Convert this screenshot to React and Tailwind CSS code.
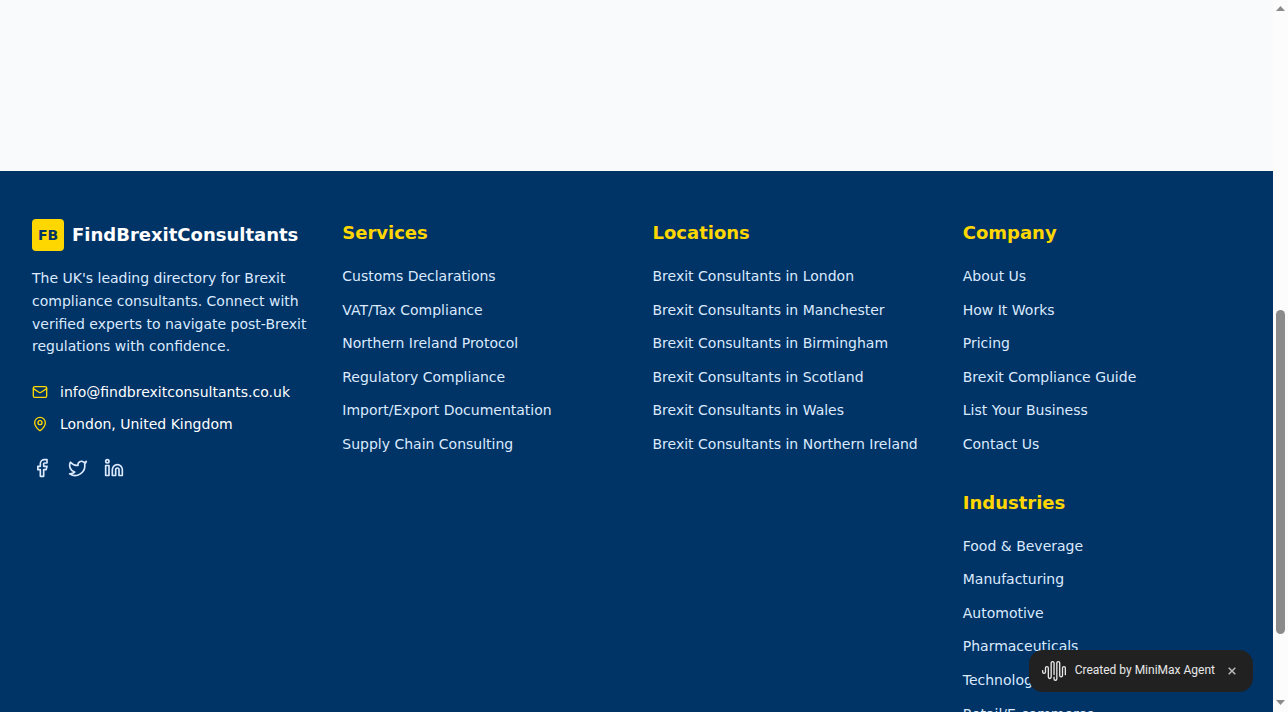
import React from 'react';
import { Facebook, Linkedin, Mail, MapPin, Twitter } from 'lucide-react';

const services = [
  'Customs Declarations',
  'VAT/Tax Compliance',
  'Northern Ireland Protocol',
  'Regulatory Compliance',
  'Import/Export Documentation',
  'Supply Chain Consulting',
];

const locations = [
  'Brexit Consultants in London',
  'Brexit Consultants in Manchester',
  'Brexit Consultants in Birmingham',
  'Brexit Consultants in Scotland',
  'Brexit Consultants in Wales',
  'Brexit Consultants in Northern Ireland',
];

const company = [
  'About Us',
  'How It Works',
  'Pricing',
  'Brexit Compliance Guide',
  'List Your Business',
  'Contact Us',
];

const industries = [
  'Food & Beverage',
  'Manufacturing',
  'Automotive',
  'Pharmaceuticals',
  'Technology',
  'Retail/E-commerce',
];

const socials = [
  { label: 'Facebook', Icon: Facebook },
  { label: 'Twitter', Icon: Twitter },
  { label: 'LinkedIn', Icon: Linkedin },
];

function LinkGroup({ title, items }) {
  return (
    <nav aria-label={title}>
      <h3 className="mb-4 text-lg font-bold text-[#ffd700]">{title}</h3>
      <ul className="space-y-2 leading-[1.6]">
        {items.map((item) => (
          <li key={item}>
            <a href="#" className="text-sm text-blue-100 hover:text-[#ffd700]">
              {item}
            </a>
          </li>
        ))}
      </ul>
    </nav>
  );
}

function Brand() {
  return (
    <div>
      <div className="mb-4 flex items-center gap-2">
        <div className="flex size-8 shrink-0 items-center justify-center rounded bg-[#ffd700]">
          <span className="text-sm font-bold text-[#003366]">FB</span>
        </div>
        <span className="text-lg font-bold text-white">FindBrexitConsultants</span>
      </div>
      <p className="mb-6 text-sm leading-relaxed text-blue-100">
        The UK's leading directory for Brexit compliance consultants. Connect with verified experts
        to navigate post-Brexit regulations with confidence.
      </p>
      <div className="space-y-3 text-sm text-white">
        <div className="flex items-center gap-3">
          <Mail className="size-4 shrink-0 text-[#ffd700]" />
          <span>info@findbrexitconsultants.co.uk</span>
        </div>
        <div className="flex items-center gap-3">
          <MapPin className="size-4 shrink-0 text-[#ffd700]" />
          <span>London, United Kingdom</span>
        </div>
      </div>
      <div className="mt-6 flex gap-4">
        {socials.map(({ label, Icon }) => (
          <a key={label} href="#" aria-label={label} className="text-blue-100 hover:text-[#ffd700]">
            <Icon className="size-5" />
          </a>
        ))}
      </div>
    </div>
  );
}

function WaveLogo() {
  return (
    <svg viewBox="0 0 24 24" className="size-6 shrink-0" fill="currentColor" aria-hidden="true">
      <path d="M16.278 2c1.156 0 2.093.927 2.093 2.07v12.501a.74.74 0 00.744.709.74.74 0 00.743-.709V9.099a2.06 2.06 0 012.071-2.049A2.06 2.06 0 0124 9.1v6.561a.649.649 0 01-.652.645.649.649 0 01-.653-.645V9.1a.762.762 0 00-.766-.758.762.762 0 00-.766.758v7.472a2.037 2.037 0 01-2.048 2.026 2.037 2.037 0 01-2.048-2.026v-12.5a.785.785 0 00-.788-.753.785.785 0 00-.789.752l-.001 15.904A2.037 2.037 0 0113.441 22a2.037 2.037 0 01-2.048-2.026V18.04c0-.356.292-.645.652-.645.36 0 .652.289.652.645v1.934c0 .263.142.506.372.638.23.131.514.131.744 0a.734.734 0 00.372-.638V4.07c0-1.143.937-2.07 2.093-2.07zm-5.674 0c1.156 0 2.093.927 2.093 2.07v11.523a.648.648 0 01-.652.645.648.648 0 01-.652-.645V4.07a.785.785 0 00-.789-.78.785.785 0 00-.789.78v14.013a2.06 2.06 0 01-2.07 2.048 2.06 2.06 0 01-2.071-2.048V9.1a.762.762 0 00-.766-.758.762.762 0 00-.766.758v3.8a2.06 2.06 0 01-2.071 2.049A2.06 2.06 0 010 12.9v-1.378c0-.357.292-.646.653-.646.36 0 .653.29.653.646V12.9c0 .418.343.757.766.757s.766-.339.766-.757V9.099a2.06 2.06 0 012.07-2.048 2.06 2.06 0 012.071 2.048v8.984c0 .419.343.758.767.758.423 0 .766-.339.766-.758V4.07c0-1.143.937-2.07 2.093-2.07z" />
    </svg>
  );
}

function AgentBadge() {
  return (
    <div className="absolute right-5 bottom-5 flex h-[42px] items-center gap-[9px] rounded-[14px] bg-[#212121] px-[13px] pb-px font-[Roboto,sans-serif] text-white/90">
      <WaveLogo />
      <span className="text-xs leading-[17px] whitespace-nowrap">Created by MiniMax Agent</span>
      <button
        type="button"
        aria-label="Close"
        className="flex size-4 items-center justify-center text-[#bbbbbb]"
      >
        <svg viewBox="0 0 8 8" className="size-2" stroke="currentColor" strokeWidth="1.5" aria-hidden="true">
          <path d="M0.7 0.7 7.3 7.3M7.3 0.7 0.7 7.3" />
        </svg>
      </button>
    </div>
  );
}

function ScrollRail() {
  return (
    <div className="flex w-[15px] shrink-0 flex-col items-center bg-[#fcfcfc] text-[#8b8b8b]" aria-hidden="true">
      <svg viewBox="0 0 15 15" className="size-[15px] shrink-0" fill="currentColor">
        <path d="M7.5 6 12 11H3z" />
      </svg>
      <div className="flex w-[9px] flex-1 flex-col">
        <div className="grow-[295]" />
        <div className="grow-[324] rounded-full bg-[#8b8b8b]" />
        <div className="grow-[63]" />
      </div>
      <svg viewBox="0 0 15 15" className="size-[15px] shrink-0" fill="currentColor">
        <path d="M3 3h9L7.5 8z" />
      </svg>
    </div>
  );
}

export default function App() {
  return (
    <div className="flex h-screen overflow-hidden bg-[#f8fafc] font-['DejaVu_Sans',sans-serif]">
      <div className="relative min-w-0 flex-1 overflow-hidden">
        <main className="h-[171px]" />
        <footer className="min-h-full bg-[#003366] px-8 py-12">
          <div className="grid grid-cols-1 gap-8 md:grid-cols-2 lg:grid-cols-4">
            <Brand />
            <LinkGroup title="Services" items={services} />
            <LinkGroup title="Locations" items={locations} />
            <div className="space-y-8">
              <LinkGroup title="Company" items={company} />
              <LinkGroup title="Industries" items={industries} />
            </div>
          </div>
        </footer>
        <AgentBadge />
      </div>
      <ScrollRail />
    </div>
  );
}
